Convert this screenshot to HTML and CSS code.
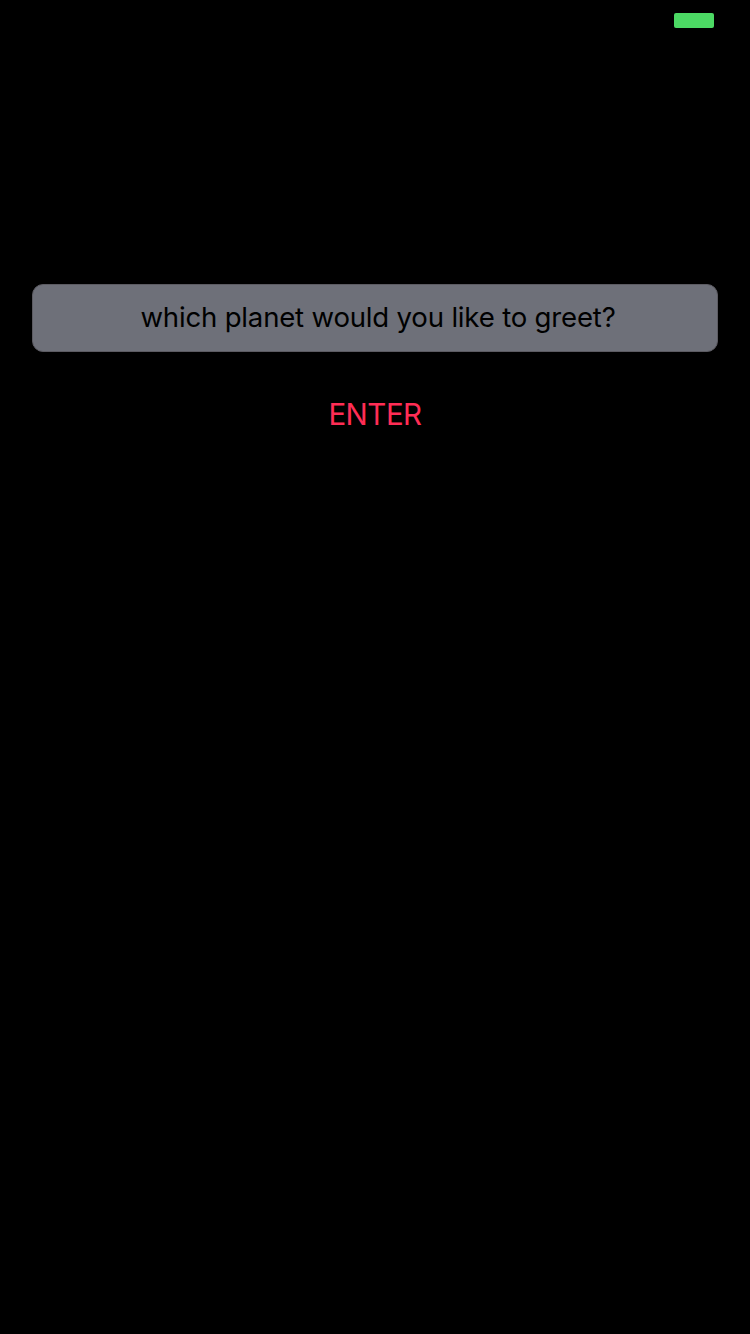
FILE: index.html
```html
<!DOCTYPE html>
<html lang="en">
<head>
<meta charset="utf-8">
<title>Hello Planet</title>
<link rel="stylesheet" href="styles.css">
</head>
<body>
<main class="screen">
  <header class="status-bar"><div class="battery"></div></header>
  <div class="field"><span class="field-text">which planet would you like to greet?</span></div>
  <div class="enter"><span class="enter-text">ENTER</span></div>
</main>
</body>
</html>
```
FILE: styles.css
```css
body {
  margin: 0;
  background: #000;
  font-family: Inter, "Liberation Sans", sans-serif;
}
.screen {
  box-sizing: border-box;
  height: 1334px;
  display: flex;
  flex-direction: column;
  align-items: stretch;
  overflow: hidden;
}
.status-bar {
  box-sizing: border-box;
  height: 40px;
  padding: 13px 36px 0 0;
  display: flex;
  justify-content: flex-end;
}
.battery {
  width: 40px;
  height: 15px;
  border-radius: 2px;
  background: #4cd964;
}
.field {
  box-sizing: border-box;
  height: 68px;
  margin: 244px 32px 0;
  padding: 0 0 2px 6px;
  border: 1px solid #5c5b62;
  border-radius: 11px;
  background: #6e7079;
  display: flex;
  align-items: center;
  justify-content: center;
}
.field-text {
  font-size: 27.6px;
  letter-spacing: -0.2px;
  line-height: 34px;
  white-space: nowrap;
  color: #000;
}
.enter {
  height: 36px;
  margin-top: 44px;
  display: flex;
  justify-content: center;
}
.enter-text {
  font-size: 29.5px;
  letter-spacing: -0.5px;
  line-height: 36px;
  color: #ff2d55;
}
```
